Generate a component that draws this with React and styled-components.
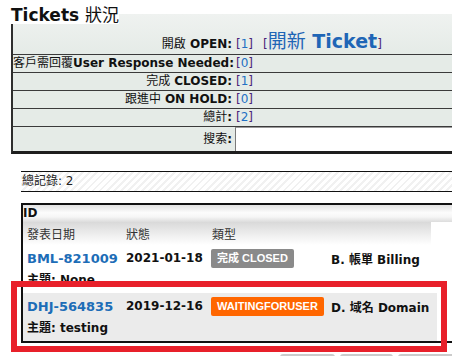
import React from "react";
import styled, { createGlobalStyle } from "styled-components";

const GlobalStyle = createGlobalStyle`
  body {
    margin: 0;
    background: #fff;
    font-family: "DejaVu Sans", Verdana, "Noto Sans CJK TC", sans-serif;
    font-size: 12px;
    color: #111;
    overflow: hidden;
  }
`;

const Page = styled.div`
  position: relative;
  width: 452px;
  height: 356px;
  overflow: hidden;
`;

const Title = styled.h2`
  position: relative;
  z-index: 1;
  display: inline-block;
  margin: 0 0 0 11px;
  padding-top: 6px;
  height: 24px;
  box-sizing: border-box;
  line-height: 18px;
  font-size: 17px;
  font-weight: bold;
  background: #fff;
  color: #111;
`;

const Cjk = styled.span`
  font-weight: normal;
`;

const StatTable = styled.div`
  margin: -10px 0 0 11px;
  width: 445px;
  border-left: 2px solid #2e2e2e;
  border-bottom: 3px solid #1e1e1e;
  background: #e5ebe7;
`;

const StatRow = styled.div`
  display: grid;
  grid-template-columns: 222px 1fr;
  align-items: end;
  min-height: ${({ $tall }) => ($tall ? "41px" : "17px")};
  padding-bottom: ${({ $tall }) => ($tall ? "1px" : "0")};
  box-sizing: border-box;
  border-bottom: ${({ $last }) => ($last ? "none" : "1px solid #3a3a3a")};
  background: ${({ $tall }) =>
    $tall ? "linear-gradient(#eff2f0, #e5ebe7)" : "transparent"};
`;

const Label = styled.div`
  text-align: right;
  padding-right: 3px;
  font-weight: bold;
  line-height: 17px;
  white-space: nowrap;
  align-self: ${({ $mid }) => ($mid ? "center" : "end")};
`;

const Value = styled.div`
  padding-left: 1px;
  line-height: 17px;
  white-space: nowrap;
`;

const Bracket = styled.span`
  color: #4a2378;
`;

const Count = styled.span`
  color: #2270c4;
`;

const NewLink = styled.span`
  margin-left: 10px;
  color: #4a2378;

  b {
    font-size: 19px;
    color: #1f66b6;
  }

  b span {
    font-weight: normal;
  }
`;

const SearchInput = styled.input`
  display: block;
  width: 100%;
  height: 24px;
  margin: 0;
  box-sizing: border-box;
  border: none;
  border-left: 1px solid #7a7a7a;
  border-top: 1px solid #9a9a9a;
  background: #fff;
  outline: none;
`;

const Lower = styled.div`
  margin: 17px 0 0 21px;
`;

const Summary = styled.div`
  height: 21px;
  box-sizing: border-box;
  border-top: 1px solid #111;
  border-bottom: 1px solid #111;
  padding-left: 1px;
  line-height: 19px;
  color: #222;
  background: repeating-linear-gradient(
    135deg,
    #ffffff 0 3px,
    #f1f1f1 3px 5px
  );
`;

const ListBox = styled.div`
  margin-top: 11px;
  border-top: 2px solid #111;
  border-left: 2px solid #111;
  border-bottom: 2px solid #111;
`;

const IdHead = styled.div`
  height: 17px;
  line-height: 17px;
  font-weight: bold;
  color: #111;
  background: linear-gradient(#e2e2e2, #fcfcfc 45%, #f6f6f6 70%, #dcdcdc);
`;

const cols = "99px 85px 120px 1fr";

const ColHead = styled.div`
  display: grid;
  grid-template-columns: ${cols};
  align-items: center;
  width: 408px;
  height: 23px;
  padding-left: 4px;
  box-sizing: border-box;
  color: #333;
  background: linear-gradient(#d9d9d9, #f4f4f4 70%, #ffffff);

  span:nth-child(3) {
    padding-left: 1px;
  }
`;

const TicketRow = styled.div`
  width: 414px;
  padding: 2px 0 2px 4px;
  box-sizing: border-box;
  background: ${({ $shade }) => ($shade ? "#ebebeb" : "transparent")};
`;

const MainLine = styled.div`
  display: grid;
  grid-template-columns: ${cols};
  align-items: center;
  height: 22px;
  white-space: nowrap;
`;

const TicketId = styled.span`
  font-size: 13px;
  font-weight: bold;
  color: #1d6db7;
`;

const DateText = styled.span`
  font-weight: bold;
  color: #111;
`;

const Badge = styled.span`
  justify-self: start;
  height: 19px;
  padding: 0 6px;
  line-height: 19px;
  border-radius: 2px;
  font-family: "Liberation Sans", Arial, "Noto Sans CJK TC", sans-serif;
  font-size: 11px;
  font-weight: bold;
  color: #fff;
  background: ${({ $tone }) => ($tone === "wait" ? "#ff6600" : "#8a8a8a")};
`;

const TypeText = styled.span`
  font-weight: bold;
  color: #111;
`;

const Subject = styled.div`
  height: 22px;
  line-height: 22px;
  font-weight: bold;
  color: #111;
`;

const Pager = styled.div`
  display: flex;
  gap: 5px;
  margin: 11px 0 0 259px;
`;

const PageBtn = styled.span`
  flex: none;
  width: ${({ $w }) => $w}px;
  height: 20px;
  border-radius: 3px 3px 0 0;
  background: #cbcbcb;
`;

const Highlight = styled.div`
  position: absolute;
  left: 11px;
  top: 281px;
  width: 436px;
  height: 71px;
  box-sizing: border-box;
  border: 6px solid #e8202a;
  pointer-events: none;
`;

const stats = [
  { cjk: "客戶需回覆", en: "User Response Needed:", n: 0 },
  { cjk: "完成 ", en: "CLOSED:", n: 1 },
  { cjk: "跟進中 ", en: "ON HOLD:", n: 0 },
  { cjk: "總計", en: ":", n: 2 },
];

const tickets = [
  {
    id: "BML-821009",
    date: "2021-01-18",
    status: "完成 CLOSED",
    tone: "closed",
    type: "B. 帳單 Billing",
    subject: "None",
  },
  {
    id: "DHJ-564835",
    date: "2019-12-16",
    status: "WAITINGFORUSER",
    tone: "wait",
    type: "D. 域名 Domain",
    subject: "testing",
  },
];

const Num = ({ n }) => (
  <>
    <Bracket>[</Bracket>
    <Count>{n}</Count>
    <Bracket>]</Bracket>
  </>
);

const App = () => {
  return (
    <Page>
      <GlobalStyle />
      <Title>
        Tickets <Cjk>狀況</Cjk>
      </Title>
      <StatTable>
        <StatRow $tall>
          <Label>
            <Cjk>開啟</Cjk> OPEN:
          </Label>
          <Value>
            <Num n={1} />
            <NewLink>
              [
              <b>
                <span>開新</span> Ticket
              </b>
              ]
            </NewLink>
          </Value>
        </StatRow>
        {stats.map((s) => (
          <StatRow key={s.en}>
            <Label>
              <Cjk>{s.cjk}</Cjk>
              {s.en}
            </Label>
            <Value>
              <Num n={s.n} />
            </Value>
          </StatRow>
        ))}
        <StatRow $last>
          <Label $mid>
            <Cjk>搜索</Cjk>:
          </Label>
          <SearchInput type="text" />
        </StatRow>
      </StatTable>

      <Lower>
        <Summary>總記錄: 2</Summary>
        <ListBox>
          <IdHead>ID</IdHead>
          <ColHead>
            <span>發表日期</span>
            <span>狀態</span>
            <span>類型</span>
          </ColHead>
          {tickets.map((t, i) => (
            <TicketRow key={t.id} $shade={i === 1}>
              <MainLine>
                <TicketId>{t.id}</TicketId>
                <DateText>{t.date}</DateText>
                <Badge $tone={t.tone}>{t.status}</Badge>
                <TypeText>{t.type}</TypeText>
              </MainLine>
              <Subject>主題: {t.subject}</Subject>
            </TicketRow>
          ))}
        </ListBox>
        <Pager>
          <PageBtn $w={55} />
          <PageBtn $w={53} />
          <PageBtn $w={56} />
        </Pager>
      </Lower>

      <Highlight />
    </Page>
  );
};

export default App;
